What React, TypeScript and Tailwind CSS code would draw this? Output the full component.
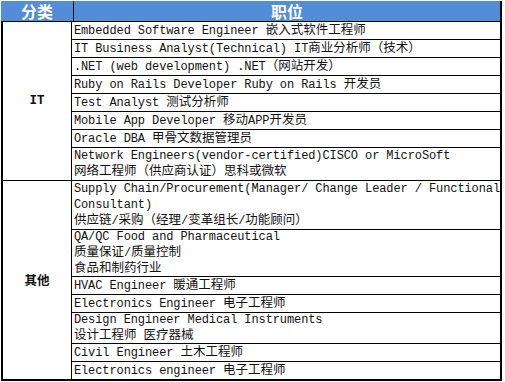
import React from "react";

type Row = { h: string; lines: string[] };

const itRows: Row[] = [
  { h: "h-[18px]", lines: ["Embedded Software Engineer 嵌入式软件工程师"] },
  { h: "h-[18px]", lines: ["IT Business Analyst(Technical) IT商业分析师（技术）"] },
  { h: "h-[18px]", lines: [".NET (web development) .NET（网站开发）"] },
  { h: "h-[18px]", lines: ["Ruby on Rails Developer Ruby on Rails 开发员"] },
  { h: "h-[18px]", lines: ["Test Analyst 测试分析师"] },
  { h: "h-[18px]", lines: ["Mobile App Developer 移动APP开发员"] },
  { h: "h-[18px]", lines: ["Oracle DBA 甲骨文数据管理员"] },
  {
    h: "h-[33px]",
    lines: [
      "Network Engineers(vendor-certified)CISCO or MicroSoft",
      "网络工程师（供应商认证）思科或微软",
    ],
  },
];

const otherRows: Row[] = [
  {
    h: "h-[49px]",
    lines: [
      "Supply Chain/Procurement(Manager/ Change Leader / Functional",
      "Consultant)",
      "供应链/采购（经理/变革组长/功能顾问）",
    ],
  },
  {
    h: "h-[47px]",
    lines: ["QA/QC Food and Pharmaceutical", "质量保证/质量控制", "食品和制药行业"],
  },
  { h: "h-[18px]", lines: ["HVAC Engineer 暖通工程师"] },
  { h: "h-[18px]", lines: ["Electronics Engineer 电子工程师"] },
  {
    h: "h-[31px]",
    lines: ["Design Engineer Medical Instruments", "设计工程师 医疗器械"],
  },
  { h: "h-[18px]", lines: ["Civil Engineer 土木工程师"] },
  { h: "h-[18px]", lines: ["Electronics engineer 电子工程师"] },
];

function Mixed({ text }: { text: string }) {
  const parts = text.split(/([\u2E80-\u9FFF\uFF00-\uFFEF\u3000-\u303F]+)/);
  return (
    <>
      {parts.map((p, i) =>
        i % 2 === 1 ? (
          <span key={i} className="text-[12.5px] tracking-normal">
            {p}
          </span>
        ) : (
          <span key={i}>{p}</span>
        )
      )}
    </>
  );
}

function RowCell({ row }: { row: Row }) {
  return (
    <div
      className={`${row.h} border-t border-black flex flex-col justify-center pl-[2px] overflow-visible`}
    >
      {row.lines.map((l, i) => (
        <div key={i} className="leading-[16px] whitespace-pre">
          <Mixed text={l} />
        </div>
      ))}
    </div>
  );
}

export default function App() {
  return (
    <div className="w-[505px] h-[382px] bg-white pt-px pl-px overflow-hidden">
      <div
        className="w-[501px] border-r-2 border-black text-[#111] text-[12px] tracking-[-0.1px]"
        style={{ fontFamily: '"Liberation Mono", "Noto Sans CJK SC", monospace' }}
      >
        <div className="flex h-[20px] bg-[#538DD5] text-white tracking-normal">
          <div
            className="w-[72px] flex items-center justify-center text-[16px] font-bold leading-none"
            style={{ fontFamily: '"Noto Sans CJK SC", sans-serif' }}
          >
            分类
          </div>
          <div
            className="flex-1 border-l border-black flex items-center justify-center text-[16px] font-bold leading-none"
            style={{ fontFamily: '"Noto Sans CJK SC", sans-serif' }}
          >
            职位
          </div>
        </div>
        <div className="flex border-l-2 border-b-2 border-black">
          <div className="w-[70px] flex flex-col tracking-normal">
            <div className="h-[159px] border-t border-black flex items-center justify-center font-bold text-[12.5px]">
              IT
            </div>
            <div
              className="h-[199px] border-t border-black flex items-center justify-center font-bold text-[12.5px]"
              style={{ fontFamily: '"Noto Sans CJK SC", sans-serif' }}
            >
              其他
            </div>
          </div>
          <div className="flex-1 border-l border-black flex flex-col">
            {itRows.map((r, i) => (
              <RowCell key={"it" + i} row={r} />
            ))}
            {otherRows.map((r, i) => (
              <RowCell key={"o" + i} row={r} />
            ))}
          </div>
        </div>
      </div>
    </div>
  );
}
